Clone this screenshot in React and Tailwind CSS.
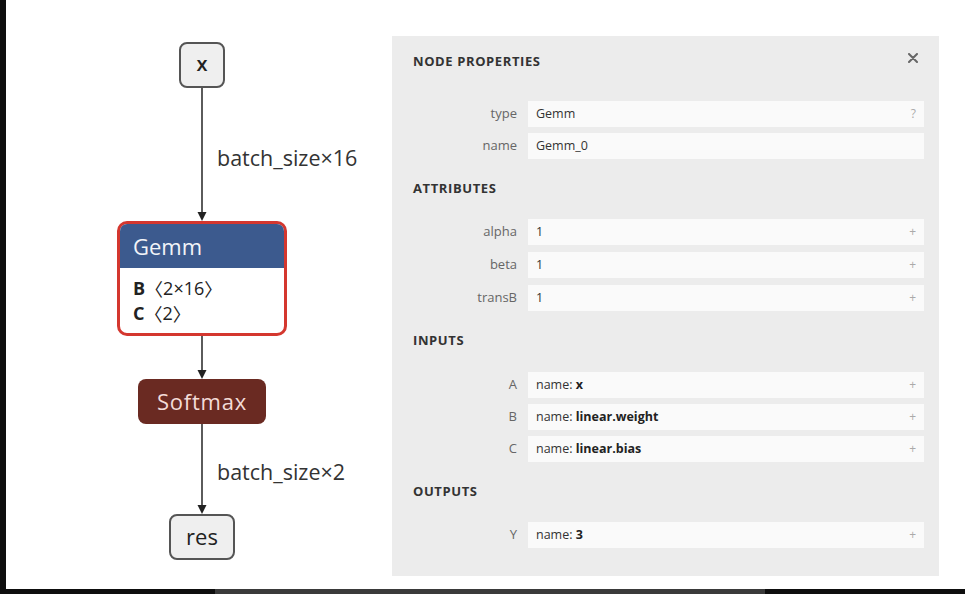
import React from 'react';

const FONT = { fontFamily: '"Open Sans", "Noto Sans", sans-serif' };
const CJK = { fontFamily: '"Noto Sans CJK SC", sans-serif' };

function Edge({ height, label, labelTop }) {
  return (
    <div className="relative flex justify-center" style={{ height }}>
      <svg width="12" height={height} viewBox={`0 0 12 ${height}`}>
        <line x1="6" y1="0" x2="6" y2={height - 7} stroke="#333" strokeWidth="1.6" />
        <path d={`M1.5 ${height - 9} L10.5 ${height - 9} L6 ${height} Z`} fill="#222" />
      </svg>
      {label && (
        <span
          className="absolute left-[21px] whitespace-nowrap text-[21.5px] leading-[26px] text-[#333]"
          style={{ top: labelTop }}
        >
          {label}
        </span>
      )}
    </div>
  );
}

function Graph() {
  return (
    <div className="flex w-[200px] flex-col items-center pt-[42px]" style={FONT}>
      <div className="flex h-[46px] w-[46px] items-center justify-center rounded-[8px] border-2 border-[#555] bg-[#efefef] pb-[2px] text-[20px] font-semibold text-[#222]">
        x
      </div>
      <Edge height={133} label="batch_size×16" labelTop={57} />
      <div className="flex h-[115px] w-[170px] flex-col overflow-hidden rounded-[10px] border-[3px] border-[#d4372f] bg-white">
        <div className="flex h-[44px] items-center bg-[#3c5a8e] px-[13px] text-[22px] text-[#f2f4f8]">Gemm</div>
        <div className="px-[13px] pt-[8px] text-[18px] leading-[25px] text-[#222]">
          <div className="flex items-center">
            <span className="font-bold">B</span>
            <span style={CJK}>〈</span>2×16<span style={CJK}>〉</span>
          </div>
          <div className="flex items-center">
            <span className="font-bold">C</span>
            <span style={CJK}>〈</span>2<span style={CJK}>〉</span>
          </div>
        </div>
      </div>
      <Edge height={43} />
      <div className="flex h-[45px] w-[128px] items-center justify-center rounded-[8px] bg-[#6a2a22] pb-[1px] text-[22px] tracking-[0.8px] text-[#f3dcd8]">
        Softmax
      </div>
      <Edge height={90} label="batch_size×2" labelTop={35} />
      <div className="flex h-[46px] w-[66px] items-center justify-center rounded-[8px] border-2 border-[#555] bg-[#efefef] pb-[2px] text-[22px] text-[#222]">
        res
      </div>
    </div>
  );
}

function Row({ label, children, icon = '+' }) {
  return (
    <div className="flex h-[26px] items-center">
      <div className="w-[114px] text-right text-[13px] text-[#666]">{label}</div>
      <div className="ml-[11px] flex h-full flex-1 items-center justify-between bg-[#fafafa] pl-[8px] pr-[8px] text-[12.5px] text-[#333]">
        <span>{children}</span>
        <span className="text-[12px] text-[#aaa]">{icon}</span>
      </div>
    </div>
  );
}

function Header({ children, className }) {
  return (
    <div className={`h-[14px] pl-[21px] text-[13px] font-bold leading-[14px] tracking-[0.6px] text-[#333] ${className}`}>
      {children}
    </div>
  );
}

function Panel() {
  return (
    <div className="mt-[36px] flex h-[540px] w-[547px] flex-col bg-[#ececec] pl-[11px] pr-[15px]" style={FONT}>
      <div className="-ml-[11px] -mr-[15px] mt-[18px] flex items-center justify-between pr-[21px]">
        <Header>NODE PROPERTIES</Header>
        <svg width="10" height="10" viewBox="0 0 10 10" className="-mt-[6px]">
          <path d="M1 1 L9 9 M9 1 L1 9" stroke="#666" strokeWidth="2" strokeLinecap="round" />
        </svg>
      </div>

      <div className="mt-[33px] flex flex-col gap-[6px]">
        <Row label="type" icon="?">Gemm</Row>
        <Row label="name" icon="">Gemm_0</Row>
      </div>

      <Header className="-ml-[11px] mt-[22px]">ATTRIBUTES</Header>
      <div className="mt-[24px] flex flex-col gap-[7px]">
        <Row label="alpha">1</Row>
        <Row label="beta">1</Row>
        <Row label="transB">1</Row>
      </div>

      <Header className="-ml-[11px] mt-[22px]">INPUTS</Header>
      <div className="mt-[25px] flex flex-col gap-[6px]">
        <Row label="A">name: <b className="text-[#222]">x</b></Row>
        <Row label="B">name: <b className="text-[#222]">linear.weight</b></Row>
        <Row label="C">name: <b className="text-[#222]">linear.bias</b></Row>
      </div>

      <Header className="-ml-[11px] mt-[22px]">OUTPUTS</Header>
      <div className="mt-[24px] flex flex-col">
        <Row label="Y">name: <b className="text-[#222]">3</b></Row>
      </div>
    </div>
  );
}

export default function App() {
  return (
    <div className="flex h-[594px] w-[965px] flex-col overflow-hidden bg-white">
      <div className="flex h-[589px]">
        <div className="w-[6px] bg-[#0e0e0e]" />
        <div className="w-[386px] pl-[96px]">
          <Graph />
        </div>
        <Panel />
      </div>
      <div className="flex h-[5px]">
        <div className="w-[215px] bg-[#0e0e0e]" />
        <div className="w-[550px] bg-[#3a3a3a]" />
        <div className="flex-1 bg-[#0e0e0e]" />
      </div>
    </div>
  );
}
